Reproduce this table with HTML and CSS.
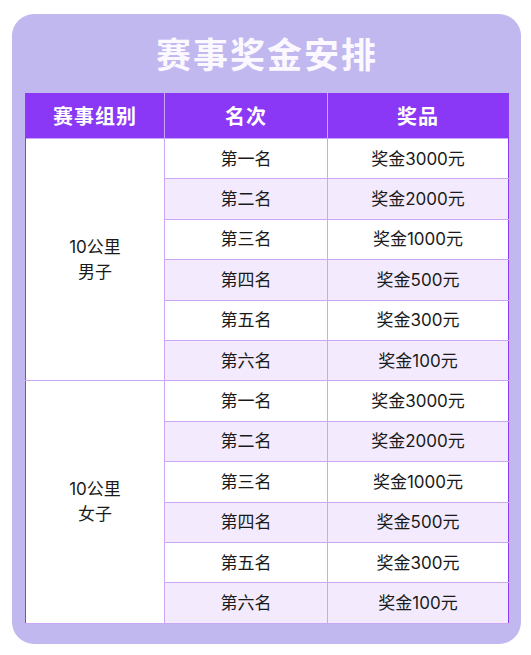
FILE: index.html
```html
<!DOCTYPE html>
<html lang="zh">
<head>
<meta charset="utf-8">
<link rel="stylesheet" href="styles.css">
</head>
<body>
<div class="card">
  <h1 class="title">赛事奖金安排</h1>
  <table class="prize">
    <colgroup>
      <col class="c1"><col class="c2"><col class="c3">
    </colgroup>
    <thead>
      <tr><th>赛事组别</th><th>名次</th><th>奖品</th></tr>
    </thead>
    <tbody>
      <tr><td class="group" rowspan="6">10公里<br>男子</td><td>第一名</td><td>奖金3000元</td></tr>
      <tr class="alt"><td>第二名</td><td>奖金2000元</td></tr>
      <tr><td>第三名</td><td>奖金1000元</td></tr>
      <tr class="alt"><td>第四名</td><td>奖金500元</td></tr>
      <tr><td>第五名</td><td>奖金300元</td></tr>
      <tr class="alt"><td>第六名</td><td>奖金100元</td></tr>
      <tr><td class="group" rowspan="6">10公里<br>女子</td><td>第一名</td><td>奖金3000元</td></tr>
      <tr class="alt"><td>第二名</td><td>奖金2000元</td></tr>
      <tr><td>第三名</td><td>奖金1000元</td></tr>
      <tr class="alt"><td>第四名</td><td>奖金500元</td></tr>
      <tr><td>第五名</td><td>奖金300元</td></tr>
      <tr class="alt"><td>第六名</td><td>奖金100元</td></tr>
    </tbody>
  </table>
</div>
</body>
</html>
```

FILE: styles.css
```css
html, body {
  margin: 0;
  padding: 0;
  background: #ffffff;
}
body {
  font-family: Inter, "Noto Sans CJK SC", sans-serif;
  color: #1a1a1a;
}
.card {
  margin: 14px 10px 12px 12px;
  background: #c2b8f0;
  border-radius: 22px;
  padding: 21px 12px 20px 13px;
}
.title {
  margin: 0 0 22px 0;
  text-align: center;
  font-family: "Noto Sans CJK SC", sans-serif;
  font-size: 35px;
  line-height: 36px;
  font-weight: 700;
  letter-spacing: 2px;
  color: #fbf9ff;
}
.prize {
  width: 100%;
  border-collapse: collapse;
  table-layout: fixed;
  background: #ffffff;
  border-left: 1px solid #8a3cf5;
  border-right: 1px solid #8a3cf5;
  border-bottom: 1px solid #8a3cf5;
}
.c1 { width: 139px; }
.c2 { width: 163px; }
.c3 { width: auto; }
.prize th {
  height: 45px;
  padding: 0;
  background: #8a38f5;
  color: #ffffff;
  font-family: "Noto Sans CJK SC", sans-serif;
  font-size: 20px;
  font-weight: 700;
  letter-spacing: 1px;
  border-left: 1px solid #c9a6fa;
  border-right: 1px solid #c9a6fa;
}
.prize th:first-child { border-left: 1px solid #8a3cf5; }
.prize th:last-child { border-right: 1px solid #8a3cf5; }
.prize td {
  height: 39.4px;
  padding: 0;
  text-align: center;
  font-size: 17px;
  line-height: 20px;
  border: 1px solid #cba8f7;
}
.prize tr.alt td { background: #f3ebfd; }
.prize td.group {
  background: #ffffff;
  line-height: 25px;
  border-left: 1px solid #8a3cf5;
}
.prize tr td:last-child { border-right: 1px solid #8a3cf5; }
.prize tbody tr:last-child td,
.prize tbody tr:nth-child(7) td.group { }
```
